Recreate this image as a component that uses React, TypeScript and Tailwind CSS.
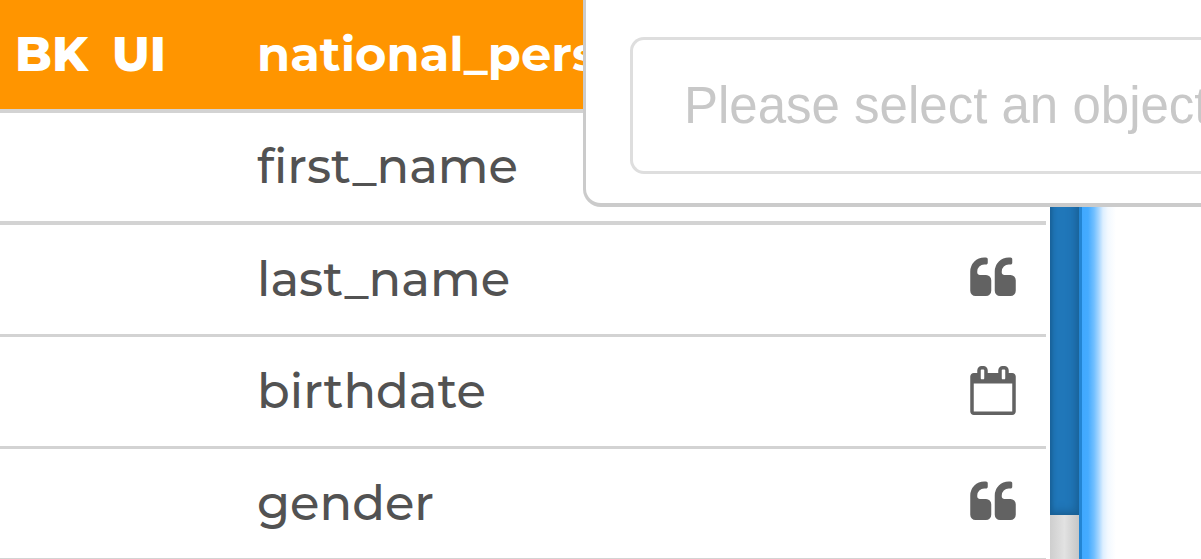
import React from "react";

type Kind = "text" | "date";

const attributes: { name: string; kind: Kind; line: string }[] = [
  { name: "first_name", kind: "text", line: "border-b-4" },
  { name: "last_name", kind: "text", line: "border-b-3" },
  { name: "birthdate", kind: "date", line: "border-b-3" },
  { name: "gender", kind: "text", line: "border-b-3" },
];

const paths: Record<Kind, string> = {
  text: "M768 960v384q0 80-56 136t-136 56h-384q-80 0-136-56t-56-136v-704q0-104 40.5-198.5t109.5-163.5 163.5-109.5 198.5-40.5h64q26 0 45 19t19 45v128q0 26-19 45t-45 19h-64q-106 0-181 75t-75 181v32q0 40 28 68t68 28h224q80 0 136 56t56 136zm896 0v384q0 80-56 136t-136 56h-384q-80 0-136-56t-56-136v-704q0-104 40.5-198.5t109.5-163.5 163.5-109.5 198.5-40.5h64q26 0 45 19t19 45v128q0 26-19 45t-45 19h-64q-106 0-181 75t-75 181v32q0 40 28 68t68 28h224q80 0 136 56t56 136z",
  date: "M128 1664h1408v-1024h-1408v1024zm384-1216v-288q0-14-9-23t-23-9h-64q-14 0-23 9t-9 23v288q0 14 9 23t23 9h64q14 0 23-9t9-23zm768 0v-288q0-14-9-23t-23-9h-64q-14 0-23 9t-9 23v288q0 14 9 23t23 9h64q14 0 23-9t9-23zm384-64v1280q0 52-38 90t-90 38h-1408q-52 0-90-38t-38-90v-1280q0-52 38-90t90-38h128v-96q0-66 47-113t113-47h64q66 0 113 47t47 113v96h384v-96q0-66 47-113t113-47h64q66 0 113 47t47 113v96h128q52 0 90 38t38 90z",
};

function TypeIcon({ kind }: { kind: Kind }) {
  return (
    <svg viewBox="0 0 1664 1792" className="block h-[49px] w-[46px] fill-[#626262]" aria-hidden="true">
      <path d={paths[kind]} />
    </svg>
  );
}

export default function App() {
  return (
    <main className="relative flex h-screen overflow-hidden bg-white font-[Montserrat,Inter,sans-serif] text-[48px] leading-none">
      <div className="min-w-0 flex-1">
        <table className="w-full table-fixed border-separate border-spacing-0 text-left">
          <colgroup>
            <col className="w-[257px]" />
            <col />
            <col className="w-[76px]" />
          </colgroup>
          <thead>
            <tr className="h-[113px] bg-[#ff9500] text-white">
              <th className="border-b-4 border-[#d3d3d3] p-0 pb-0.5 pl-[15px] font-extrabold">
                <span className="flex gap-6">
                  <span>BK</span>
                  <span>UI</span>
                </span>
              </th>
              <th className="border-b-4 border-[#d3d3d3] p-0 pb-0.5 font-bold whitespace-nowrap">national_person_id</th>
              <th className="border-b-4 border-[#d3d3d3] p-0" />
            </tr>
          </thead>
          <tbody>
            {attributes.map((a) => (
              <tr key={a.name} className="h-28 text-[#525252]">
                <td className={`${a.line} border-[#d3d3d3] p-0`} />
                <td className={`${a.line} border-[#d3d3d3] p-0 pb-0.5 font-medium`}>{a.name}</td>
                <td className={`${a.line} border-[#d3d3d3] p-0 pb-0.5`}>
                  <TypeIcon kind={a.kind} />
                </td>
              </tr>
            ))}
          </tbody>
        </table>
      </div>
      <div className="ml-1 flex w-[29px] flex-none flex-col">
        <div className="h-[515px] flex-none bg-[#2077b9] shadow-[inset_-3px_-3px_10px_#195f94,inset_2px_0_4px_#195f94]" />
        <div className="flex-1 bg-linear-to-r from-[#cecece] via-[#e2e2e2] to-[#c6c6c6]" />
      </div>
      <div className="w-[3px] flex-none bg-[#2385d3]" />
      <div className="w-[119px] flex-none bg-[linear-gradient(to_right,#40a9ff_0px,#45abff_6px,#71bfff_12px,#a9d7ff_17px,#ddefff_21px,#f3f9ff_26px,#ffffff_34px)]" />

      <section className="absolute top-0 right-0 left-[583px] rounded-bl-[18px] border-b-4 border-l-3 border-[#cbcbcb] bg-white pt-[37px] pb-[29px] pl-11">
        <input
          type="text"
          aria-label="Object"
          placeholder="Please select an object"
          className="block h-[137px] w-full rounded-l-[14px] border-y-3 border-l-3 border-[#dedede] bg-white pl-[51px] font-['Liberation_Sans',Arial,sans-serif] text-[51px] text-[#525252] outline-none placeholder:text-[#c8c8c8]"
        />
      </section>
    </main>
  );
}
